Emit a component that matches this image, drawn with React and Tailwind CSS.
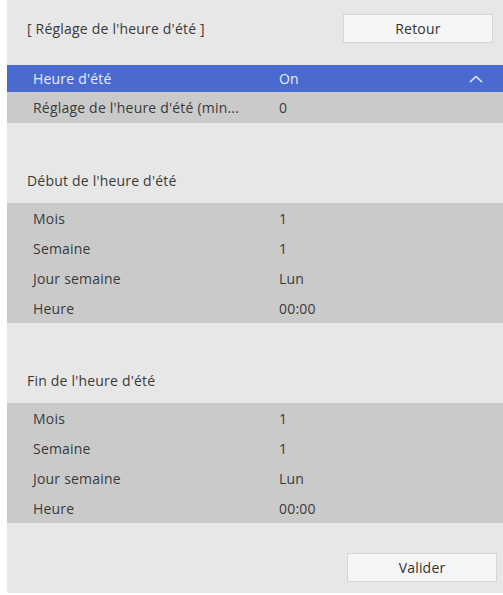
import React from 'react';

const rows = [
	{ label: 'Mois', value: '1' },
	{ label: 'Semaine', value: '1' },
	{ label: 'Jour semaine', value: 'Lun' },
	{ label: 'Heure', value: '00:00' },
];

const Row = ({ label, value, className = '' }) => (
	<div className={`flex items-center h-[30px] pl-[26px] ${className}`}>
		<span className="w-[246px] shrink-0 whitespace-nowrap">{label}</span>
		<span>{value}</span>
	</div>
);

const Group = ({ title }) => (
	<>
		<div className="h-[80px] flex items-end pb-[12px] pl-[20px]">
			{title}
		</div>
		<div className="bg-[#cacaca]">
			{rows.map((r) => (
				<Row key={r.label} label={r.label} value={r.value} />
			))}
		</div>
	</>
);

const PanelButton = ({ children }) => (
	<button className="w-[150px] h-[29px] bg-[#f5f5f5] border border-[#d6d6d6] text-[#333] text-[14px]">
		{children}
	</button>
);

export default function App() {
	return (
		<div className="w-[503px] h-[595px] bg-white pl-[7px] pb-[2px]">
			<div
				className="h-full bg-[#e7e7e7] text-[#3a3a3a] text-[14px] tracking-[0.2px] flex flex-col"
				style={{ fontFamily: '"Open Sans", "Noto Sans", sans-serif' }}
			>
				<div className="flex items-center justify-between pl-[20px] pr-[10px] pt-[13px] h-[43px]">
					<span>[ Réglage de l'heure d'été ]</span>
					<PanelButton>Retour</PanelButton>
				</div>

				<div className="mt-[22px] flex items-center h-[27px] pl-[26px] pr-[20px] bg-[#4a6ad0] text-[#e8eeff]">
					<span className="w-[246px]">Heure d'été</span>
					<span className="flex-1">On</span>
					<svg width="14" height="8" viewBox="0 0 14 8" fill="none">
						<path
							d="M1 7 L7 1.5 L13 7"
							stroke="#e8eeff"
							strokeWidth="1.6"
						/>
					</svg>
				</div>
				<Row
					label="Réglage de l'heure d'été (min..."
					value="0"
					className="bg-[#cacaca] h-[31px]"
				/>

				<Group title="Début de l'heure d'été" />
				<Group title="Fin de l'heure d'été" />

				<div className="flex justify-end pr-[6px] mt-[30px]">
					<PanelButton>Valider</PanelButton>
				</div>
			</div>
		</div>
	);
}
